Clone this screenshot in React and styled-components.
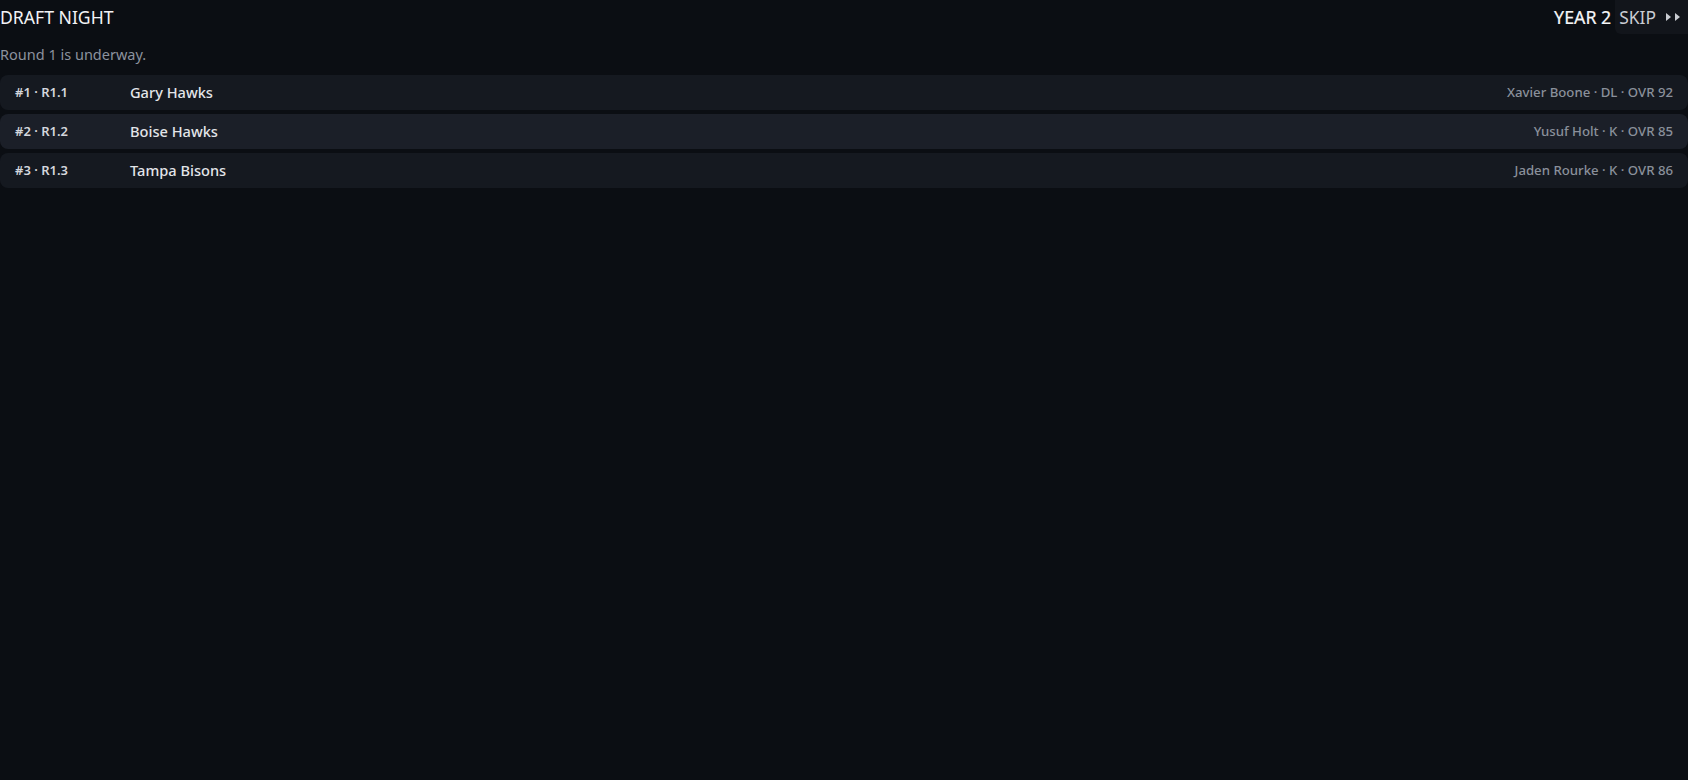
import React from "react";
import styled, { createGlobalStyle } from "styled-components";

const Global = createGlobalStyle`
  html, body {
    margin: 0;
    padding: 0;
    background: #0b0e13;
  }
  body {
    font-family: "Noto Sans", "Open Sans", sans-serif;
    color: #e6e8ec;
  }
`;

const Page = styled.div`
  display: flex;
  flex-direction: column;
  min-height: 780px;
`;

const Header = styled.header`
  display: flex;
  align-items: center;
  justify-content: space-between;
  height: 34px;
`;

const Title = styled.h1`
  margin: 0;
  font-size: 17.6px;
  font-weight: 400;
  color: #f2f3f5;
`;

const HeaderRight = styled.div`
  display: flex;
  align-items: center;
  height: 100%;
  gap: 4px;
`;

const Year = styled.span`
  font-size: 17.8px;
  font-weight: 400;
  color: #f5f6f8;
  -webkit-text-stroke: 0.2px #f5f6f8;
`;

const SkipButton = styled.button`
  display: flex;
  align-items: center;
  gap: 10px;
  height: 100%;
  padding: 0 8px 0 4px;
  border: none;
  border-radius: 0 0 0 6px;
  background: #12151b;
  color: #c9ccd2;
  font-family: inherit;
  font-size: 17.4px;
  cursor: pointer;
`;

const Subtitle = styled.p`
  margin: 10px 0 11px;
  font-size: 14.5px;
  color: #8b929e;
`;

const List = styled.ul`
  list-style: none;
  margin: 0;
  padding: 0;
  display: flex;
  flex-direction: column;
  gap: 4px;
`;

const Row = styled.li`
  display: flex;
  align-items: center;
  box-sizing: border-box;
  height: 35px;
  padding: 0 15px 2px;
  border-radius: 8px;
  background: ${(p) => (p.$active ? "#1b1f28" : "#151920")};
`;

const PickLabel = styled.span`
  width: 115px;
  font-size: 13px;
  font-weight: 600;
  color: #d4d7dd;
`;

const Team = styled.span`
  flex: 1;
  font-size: 14.6px;
  font-weight: 500;
  color: #e3e5e9;
`;

const Player = styled.span`
  font-size: 13.2px;
  font-weight: 500;
  color: #8a909b;
`;

const picks = [
  { no: 1, slot: "R1.1", team: "Gary Hawks", player: "Xavier Boone", pos: "DL", ovr: 92 },
  { no: 2, slot: "R1.2", team: "Boise Hawks", player: "Yusuf Holt", pos: "K", ovr: 85, active: true },
  { no: 3, slot: "R1.3", team: "Tampa Bisons", player: "Jaden Rourke", pos: "K", ovr: 86 },
];

function FastForward() {
  return (
    <svg width="14" height="8" viewBox="0 0 14 8" fill="currentColor" aria-hidden="true">
      <path d="M0 0 L5 4 L0 8 Z" />
      <path d="M9 0 L14 4 L9 8 Z" />
    </svg>
  );
}

export default function App() {
  return (
    <Page>
      <Global />
      <Header>
        <Title>DRAFT NIGHT</Title>
        <HeaderRight>
          <Year>YEAR 2</Year>
          <SkipButton>
            SKIP
            <FastForward />
          </SkipButton>
        </HeaderRight>
      </Header>
      <Subtitle>Round 1 is underway.</Subtitle>
      <List>
        {picks.map((p) => (
          <Row key={p.no} $active={p.active}>
            <PickLabel>
              #{p.no} · {p.slot}
            </PickLabel>
            <Team>{p.team}</Team>
            <Player>
              {p.player} · {p.pos} · OVR {p.ovr}
            </Player>
          </Row>
        ))}
      </List>
    </Page>
  );
}
